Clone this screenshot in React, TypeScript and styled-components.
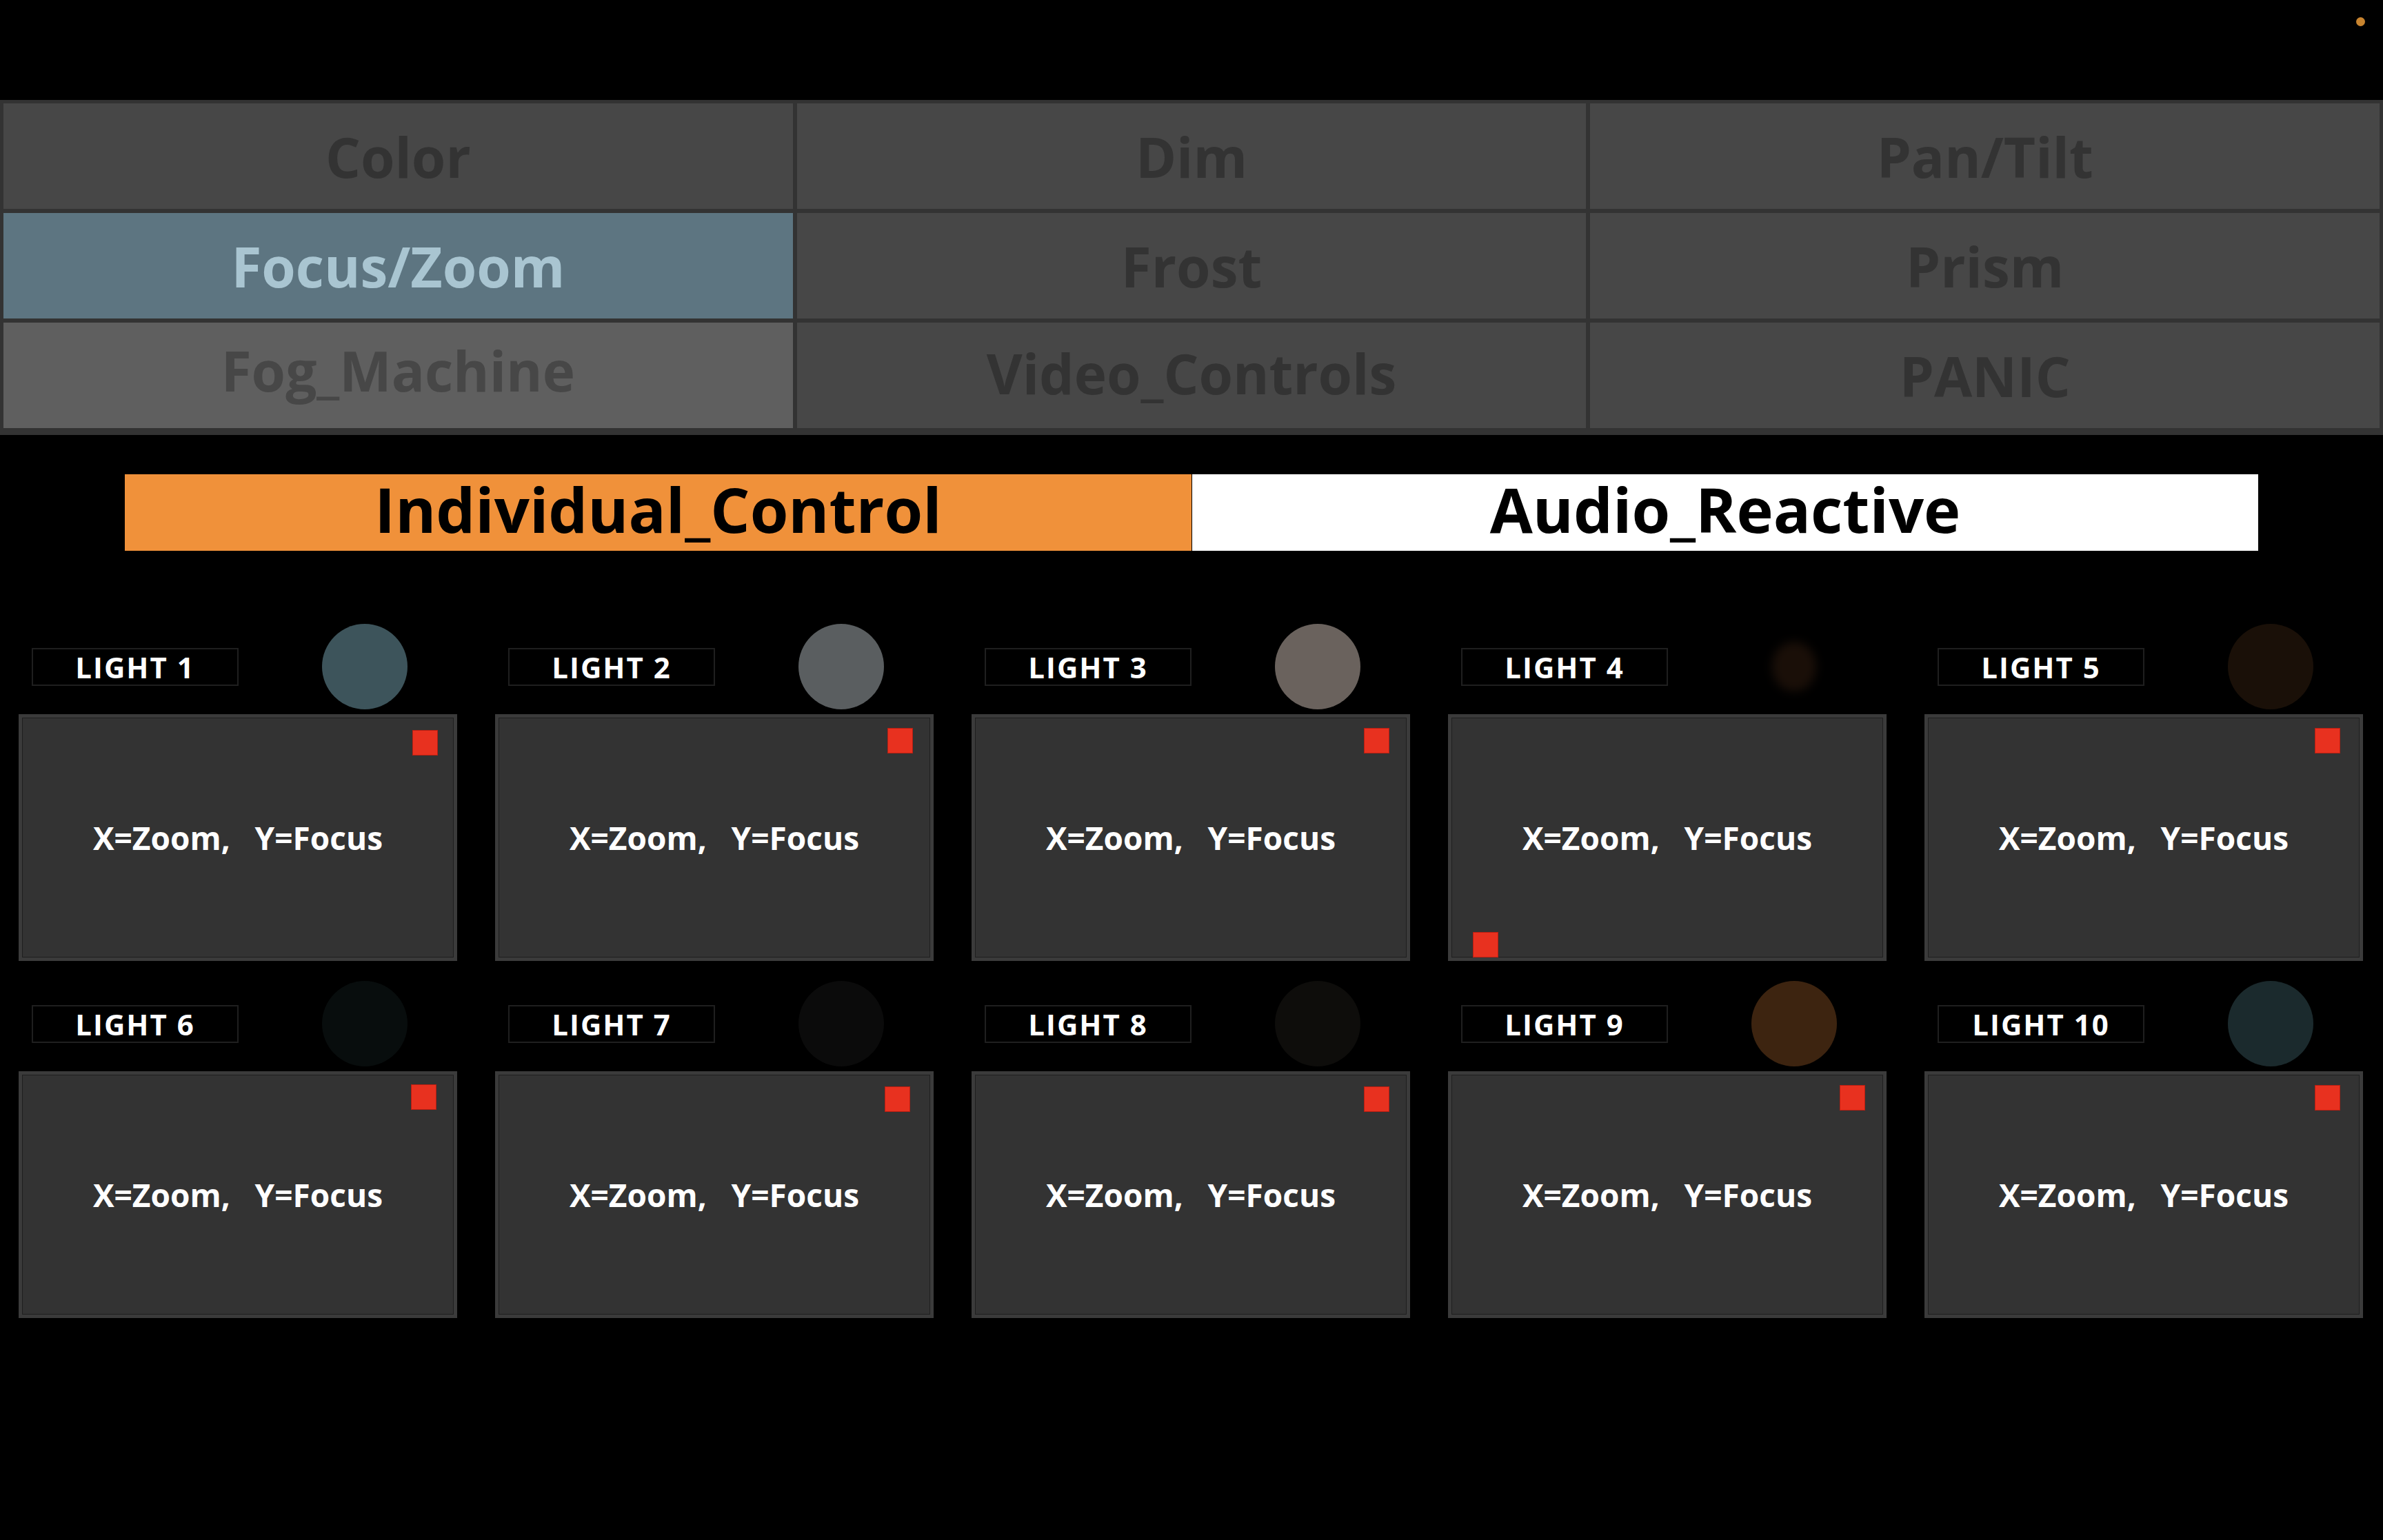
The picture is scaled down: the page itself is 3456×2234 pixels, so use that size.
import React from "react";
import styled, { createGlobalStyle } from "styled-components";

const Global = createGlobalStyle`
  html, body {
    margin: 0;
    padding: 0;
    background: #000;
  }
  body {
    font-family: "Open Sans", "Noto Sans", "Liberation Sans", sans-serif;
    width: 3456px;
    min-height: 2234px;
    overflow: hidden;
  }
`;

const Page = styled.div`
  width: 3456px;
  min-height: 2234px;
  background: #000;
  display: flex;
  flex-direction: column;
`;

const TopBar = styled.div`
  height: 145px;
  display: flex;
  justify-content: flex-end;
  align-items: flex-start;
  padding: 25px 26px 0 0;
  box-sizing: border-box;
`;

const StatusDot = styled.div`
  width: 13px;
  height: 13px;
  border-radius: 50%;
  background: #c8842f;
`;

const TabGrid = styled.div`
  display: grid;
  grid-template-columns: repeat(3, 1fr);
  grid-auto-rows: 153px;
  gap: 6px;
  padding: 5px 5px 10px 5px;
  background: #333333;
`;

type TabState = "normal" | "active" | "muted";

const Tab = styled.div<{ $state: TabState; $lift: number }>`
  display: flex;
  align-items: center;
  justify-content: center;
  box-sizing: border-box;
  padding-bottom: ${(p) => p.$lift * 2}px;
  font-weight: 700;
  font-size: 80px;
  line-height: 1.2;
  background: ${(p) =>
    p.$state === "active" ? "#5d7581" : p.$state === "muted" ? "#5f5f5f" : "#474747"};
  color: ${(p) =>
    p.$state === "active" ? "#a9c5d1" : p.$state === "muted" ? "#474747" : "#333333"};
`;

const Segmented = styled.div`
  margin: 57px 0 0 181px;
  width: 3094px;
  height: 111px;
  display: grid;
  grid-template-columns: 1fr 1fr;
  grid-template-rows: 111px;
`;

const Segment = styled.div<{ $on: boolean }>`
  display: flex;
  align-items: center;
  justify-content: center;
  padding-bottom: 10px;
  box-sizing: border-box;
  background: ${(p) => (p.$on ? "#f0913a" : "#ffffff")};
  color: #000;
  font-weight: 700;
  font-size: 90px;
  line-height: 1.1;
  border-left: ${(p) => (p.$on ? "none" : "1px solid #000")};
`;

const LightsGrid = styled.div`
  margin: 106px 0 0 27px;
  display: grid;
  grid-template-columns: repeat(5, 636px);
  column-gap: 55px;
  row-gap: 29px;
`;

const LightCell = styled.div`
  display: flex;
  flex-direction: column;
`;

const LightHeader = styled.div`
  height: 124px;
  display: flex;
  align-items: center;
`;

const LightLabel = styled.div`
  margin-left: 19px;
  width: 300px;
  height: 55px;
  box-sizing: border-box;
  border: 2px solid #1f1f1f;
  background: #000;
  color: #fff;
  font-weight: 700;
  font-size: 42px;
  letter-spacing: 2px;
  display: flex;
  align-items: center;
  justify-content: center;
`;

const Lamp = styled.div<{ $color: string; $dim?: boolean }>`
  margin-left: ${(p) => (p.$dim ? "151px" : "121px")};
  width: ${(p) => (p.$dim ? "64px" : "124px")};
  height: ${(p) => (p.$dim ? "72px" : "124px")};
  border-radius: 50%;
  background: ${(p) => p.$color};
  filter: ${(p) => (p.$dim ? "blur(7px)" : "blur(0.6px)")};
`;

const PadFrame = styled.div`
  margin-top: 7px;
  height: 358px;
  box-sizing: border-box;
  padding: 5px;
  background: #3b3b3b;
`;

const PadSurface = styled.div`
  position: relative;
  height: 100%;
  box-sizing: border-box;
  border: 1px solid #1f1f1f;
  background: #333333;
  display: flex;
  align-items: center;
  justify-content: center;
`;

const PadText = styled.div`
  color: #fff;
  font-weight: 700;
  font-size: 46px;
  white-space: pre;
`;

const Handle = styled.div`
  position: absolute;
  width: 37px;
  height: 37px;
  box-sizing: border-box;
  background: #e8311f;
  border: 1px solid #b81e12;
`;

const tabs: { label: string; state: TabState; lift: number }[] = [
  { label: "Color", state: "normal", lift: 0 },
  { label: "Dim", state: "normal", lift: 0 },
  { label: "Pan/Tilt", state: "normal", lift: 0 },
  { label: "Focus/Zoom", state: "active", lift: 0 },
  { label: "Frost", state: "normal", lift: 0 },
  { label: "Prism", state: "normal", lift: 0 },
  { label: "Fog_Machine", state: "muted", lift: 8 },
  { label: "Video_Controls", state: "normal", lift: 4 },
  { label: "PANIC", state: "normal", lift: 0 },
];

// handle offsets measured from pad frame's outer corner (px)
const lights: { color: string; dim?: boolean; x: number; y: number }[] = [
  { color: "#3d545b", x: 571, y: 23 },
  { color: "#5a5e60", x: 569, y: 20 },
  { color: "#6a625d", x: 569, y: 20 },
  { color: "#1a0f08", dim: true, x: 36, y: 316 },
  { color: "#1a1008", x: 566, y: 20 },
  { color: "#080d0d", x: 569, y: 19 },
  { color: "#0b0b0b", x: 565, y: 22 },
  { color: "#0e0d0b", x: 569, y: 22 },
  { color: "#3d2410", x: 568, y: 20 },
  { color: "#1b2a2d", x: 566, y: 20 },
];

export default function App() {
  return (
    <Page>
      <Global />
      <TopBar>
        <StatusDot />
      </TopBar>
      <TabGrid>
        {tabs.map((t) => (
          <Tab key={t.label} $state={t.state} $lift={t.lift}>
            {t.label}
          </Tab>
        ))}
      </TabGrid>
      <Segmented>
        <Segment $on>Individual_Control</Segment>
        <Segment $on={false}>Audio_Reactive</Segment>
      </Segmented>
      <LightsGrid>
        {lights.map((l, i) => (
          <LightCell key={i}>
            <LightHeader>
              <LightLabel>LIGHT {i + 1}</LightLabel>
              <Lamp $color={l.color} $dim={l.dim} />
            </LightHeader>
            <PadFrame>
              <PadSurface>
                <PadText>{"X=Zoom,   Y=Focus"}</PadText>
                <Handle style={{ left: l.x - 6, top: l.y - 6 }} />
              </PadSurface>
            </PadFrame>
          </LightCell>
        ))}
      </LightsGrid>
    </Page>
  );
}
